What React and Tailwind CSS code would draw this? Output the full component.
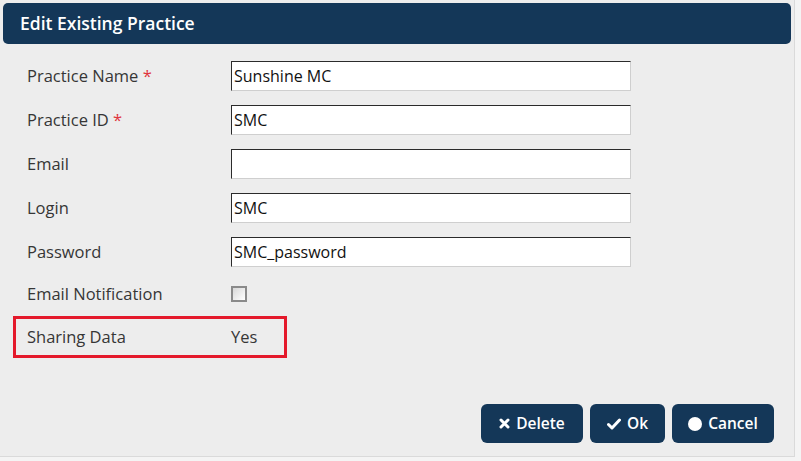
import React from "react";

const font = { fontFamily: '"Open Sans", "Noto Sans", Arial, sans-serif' };

function Row({ label, required, children }) {
  return (
    <div className="flex items-center h-[30px]">
      <div className="w-[204px] text-[16.5px] text-[#363636]">
        {label}
        {required && <span className="text-[#e0343c]"> *</span>}
      </div>
      {children}
    </div>
  );
}

function Input({ value }) {
  return (
    <div className="w-[400px] h-[30px] bg-white border border-t-[#2b2b2b] border-l-[#2b2b2b] border-r-[#cfcfcf] border-b-[#cfcfcf] flex items-center pl-[2px] text-[16px] text-[#111]">
      {value}
    </div>
  );
}

function Btn({ icon, label, w }) {
  return (
    <button className={`${w} h-[39px] rounded-[6px] bg-[#143758] text-white text-[15.5px] font-semibold flex items-center justify-center gap-[6px]`}>
      {icon}
      <span>{label}</span>
    </button>
  );
}

export default function App() {
  return (
    <div className="w-[801px] h-[461px] bg-[#f4f4f4]" style={font}>
      <div className="w-[795px] h-[457px] bg-[#ededed] border-r border-b border-[#dadada] flex flex-col">
        <div className="mt-[3px] mx-[3px] h-[41px] rounded-[5px] bg-[#143758] flex items-center pl-[17px] text-white text-[17.5px] font-semibold">
          Edit Existing Practice
        </div>
        <div className="pt-[17px] pl-[27px] flex flex-col gap-[14px]">
          <Row label="Practice Name" required>
            <Input value="Sunshine MC" />
          </Row>
          <Row label="Practice ID" required>
            <Input value="SMC" />
          </Row>
          <Row label="Email">
            <Input value="" />
          </Row>
          <Row label="Login">
            <Input value="SMC" />
          </Row>
          <Row label="Password">
            <Input value="SMC_password" />
          </Row>
        </div>
        <div className="pl-[27px] mt-[12px]">
          <Row label="Email Notification">
            <div className="w-[16px] h-[16px] border-2 border-[#8a8a8a] bg-gradient-to-br from-[#d8d8d8] to-[#ffffff]" />
          </Row>
        </div>
        <div className="ml-[13px] mt-[7px] w-[274px] h-[42px] border-[3px] border-[#e4192b] flex items-center pl-[11px] text-[16.5px] text-[#363636]">
          <div className="w-[204px]">Sharing Data</div>
          <div>Yes</div>
        </div>
        <div className="mt-auto mb-[13px] pr-[20px] flex justify-end gap-[7px]">
          <Btn
            w="w-[102px]"
            label="Delete"
            icon={
              <svg width="11" height="11" viewBox="0 0 11 11">
                <path d="M2 2 L9 9 M9 2 L2 9" stroke="white" strokeWidth="3" strokeLinecap="round" />
              </svg>
            }
          />
          <Btn
            w="w-[75px]"
            label="Ok"
            icon={
              <svg width="14" height="12" viewBox="0 0 14 12">
                <path d="M1.5 6.5 L5 10 L12.5 2" stroke="white" strokeWidth="3" fill="none" strokeLinecap="round" strokeLinejoin="round" />
              </svg>
            }
          />
          <Btn
            w="w-[102px]"
            label="Cancel"
            icon={<span className="w-[14px] h-[14px] rounded-full bg-white inline-block" />}
          />
        </div>
      </div>
    </div>
  );
}
